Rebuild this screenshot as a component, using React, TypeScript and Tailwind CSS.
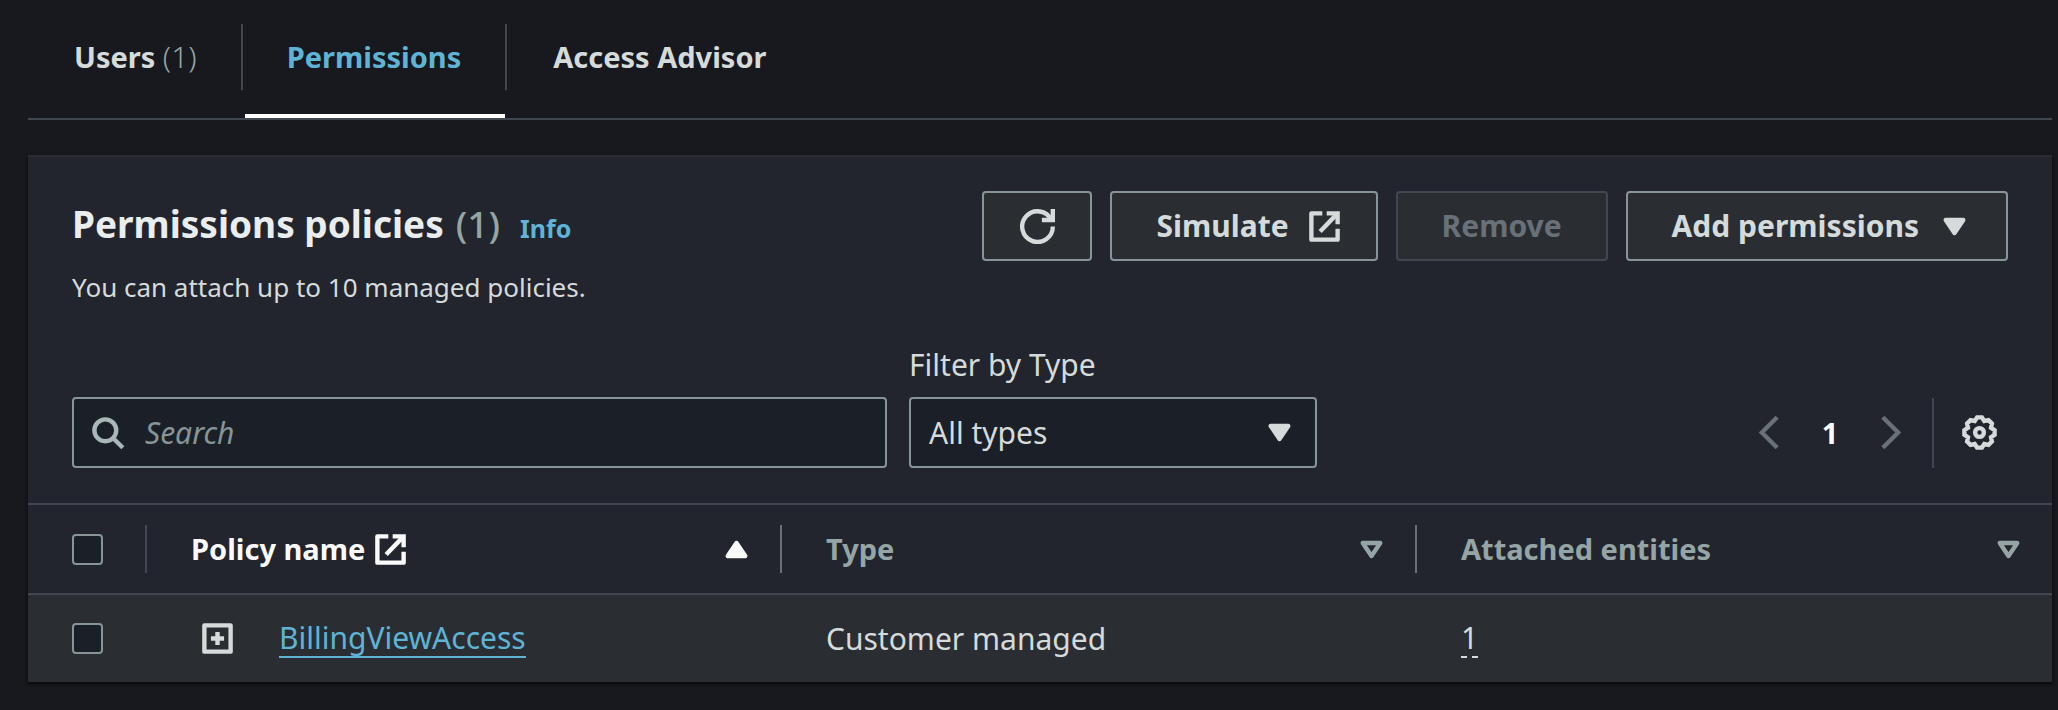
import React from "react";

type IconProps = { className?: string; children: React.ReactNode };

function Icon({ className = "", children }: IconProps) {
  return (
    <svg
      viewBox="0 0 16 16"
      className={"size-[35px] shrink-0 " + className}
      fill="none"
      stroke="currentColor"
      strokeWidth="2"
      aria-hidden="true"
    >
      {children}
    </svg>
  );
}

const External = ({ className = "" }: { className?: string }) => (
  <Icon className={className}>
    <path d="M9 2h5v5" />
    <path d="m6 10.300 8-8.300" />
    <path d="M14 9v5H2V2h5" strokeLinejoin="round" />
  </Icon>
);

const CaretDown = ({ className = "" }: { className?: string }) => (
  <Icon className={className}>
    <path d="M4 5h8l-4 6z" fill="currentColor" strokeLinejoin="round" />
  </Icon>
);

const CaretDownOutline = () => (
  <Icon>
    <path d="M4 5h8l-4 6z" strokeLinejoin="round" />
  </Icon>
);

const CaretUp = () => (
  <Icon>
    <path d="M4 11h8L8 5z" fill="currentColor" strokeLinejoin="round" />
  </Icon>
);

const Refresh = () => (
  <Icon>
    <path d="M10 5h5V0" />
    <path d="M15 8a7 7 0 1 1-.7-3" />
  </Icon>
);

const Gear = () => (
  <Icon>
    <path
      d="M6.900 1.100h2.200l1.080 1.630 1.930-.39 1.550 1.550-.39 1.930 1.630 1.080v2.200l-1.630 1.080.39 1.930-1.550 1.550-1.930-.39-1.080 1.630H6.900l-1.080-1.630-1.930.39-1.550-1.550.39-1.930L1.100 9.100V6.900l1.630-1.080-.39-1.930 1.550-1.550 1.930.39z"
    />
    <circle cx="8" cy="8" r="2" />
  </Icon>
);

const buttonBase = "flex h-[70px] items-center rounded-[4px] border-2 bg-[#2a2e33] text-[30px] leading-9 font-bold";
const buttonNormal = " border-[#879596] text-[#d5dbdb]";

function Checkbox({ label }: { label: string }) {
  return (
    <input
      type="checkbox"
      aria-label={label}
      className="block size-[31px] appearance-none rounded-[4px] border-2 border-[#879596] bg-[#1b1f28] checked:bg-[#539fe5]"
    />
  );
}

function Tabs() {
  return (
    <nav className="flex h-[120px] items-start border-b-2 border-[#414750] text-[29px] leading-9 font-bold text-[#d5dbdb]">
      <div className="flex h-[118px] flex-col pt-6">
        <a href="#users" className="flex h-[66px] items-center border-r-2 border-[#414750] pr-11 pl-[46px]">
          Users&nbsp;<span className="text-[30px] font-light text-[#95a5a6]">(1)</span>
        </a>
      </div>
      <div className="flex h-[118px] flex-col pt-6">
        <a
          href="#permissions"
          aria-current="page"
          className="flex h-[66px] items-center border-r-2 border-[#414750] px-11 text-[#5fb4d5]"
        >
          Permissions
        </a>
        <span className="mt-6 mr-[2px] ml-[2px] h-1 bg-white" />
      </div>
      <div className="flex h-[118px] flex-col pt-6">
        <a href="#advisor" className="flex h-[66px] items-center px-[46px]">
          Access Advisor
        </a>
      </div>
    </nav>
  );
}

function Toolbar() {
  return (
    <div className="flex items-end px-11">
      <label className="flex h-[71px] w-[815px] items-center rounded-[4px] border-2 border-[#879596] bg-[#1b1f28] pl-4">
        <Icon className="text-[#aab7b8]">
          <circle cx="7" cy="7" r="5" />
          <path d="m15 15-4.500-4.500" />
        </Icon>
        <input
          type="search"
          aria-label="Search"
          placeholder="Search"
          className="ml-5 w-full bg-transparent text-[30px] text-[#d5dbdb] outline-none placeholder:text-[#879596] placeholder:italic"
        />
      </label>
      <div className="ml-[22px] w-[408px]">
        <label htmlFor="type" className="mb-[14px] block text-[30px] leading-9 text-[#d5dbdb]">
          Filter by Type
        </label>
        <div className="relative">
          <select
            id="type"
            className="block h-[71px] w-full appearance-none rounded-[4px] border-2 border-[#879596] bg-[#1b1f28] pl-[18px] text-[30px] text-[#d5dbdb]"
          >
            <option>All types</option>
          </select>
          <CaretDown className="pointer-events-none absolute top-[18px] right-5 text-[#d5dbdb]" />
        </div>
      </div>
      <div className="ml-auto flex h-[71px] items-center">
        <button aria-label="Previous page" className="text-[#687078]">
          <Icon>
            <path d="m11.500 1-7 7 7 7" />
          </Icon>
        </button>
        <button aria-current="page" className="w-[86px] text-[29px] leading-9 font-bold text-[#fafafa]">
          1
        </button>
        <button aria-label="Next page" className="text-[#687078]">
          <Icon>
            <path d="m4.500 1 7 7-7 7" />
          </Icon>
        </button>
        <span className="ml-6 h-[70px] w-[2px] bg-[#414750]" />
        <button aria-label="Preferences" className="mr-[11px] ml-7 text-[#d5dbdb]">
          <Gear />
        </button>
      </div>
    </div>
  );
}

function PolicyTable() {
  return (
    <table className="w-full table-fixed border-collapse text-left text-[#d5dbdb]">
      <colgroup>
        <col className="w-[119px]" />
        <col />
        <col />
        <col />
      </colgroup>
      <thead className="text-[29px] leading-9">
        <tr className="h-[90px] border-y-2 border-[#414750] text-[#95a5a6]">
          <th className="p-0">
            <div className="flex h-12 items-center border-r-2 border-[#414750] pl-11">
              <Checkbox label="Select all policies" />
            </div>
          </th>
          <th className="p-0" aria-sort="ascending">
            <div className="flex h-12 items-center border-r-2 border-[#687078] pr-[26px] pl-11 font-bold text-[#fafafa]">
              Policy name
              <External className="ml-2" />
              <button aria-label="Sort by policy name" className="ml-auto">
                <CaretUp />
              </button>
            </div>
          </th>
          <th className="p-0">
            <div className="flex h-12 items-center border-r-2 border-[#687078] pr-[26px] pl-11 font-bold">
              Type
              <button aria-label="Sort by type" className="ml-auto">
                <CaretDownOutline />
              </button>
            </div>
          </th>
          <th className="p-0">
            <div className="flex h-12 items-center pr-[26px] pl-11 font-bold">
              Attached entities
              <button aria-label="Sort by attached entities" className="ml-auto">
                <CaretDownOutline />
              </button>
            </div>
          </th>
        </tr>
      </thead>
      <tbody className="text-[30px] leading-9">
        <tr className="h-[88px] bg-[#2a2e33]">
          <td className="p-0 pl-11">
            <Checkbox label="Select BillingViewAccess" />
          </td>
          <td className="p-0 pl-[53px]">
            <div className="flex items-center">
              <button aria-label="Expand BillingViewAccess">
                <Icon>
                  <path d="M2 2h12v12H2z" strokeLinejoin="round" />
                  <path d="M8 5v6M5 8h6" />
                </Icon>
              </button>
              <a href="#policy" className="ml-11 border-b-2 border-[#5fb4d5] text-[#5fb4d5]">
                BillingViewAccess
              </a>
            </div>
          </td>
          <td className="p-0 pl-11">Customer managed</td>
          <td className="p-0 pl-11">
            <span className="inline-block border-b-2 border-dashed border-[#d5dbdb]">1</span>
          </td>
        </tr>
      </tbody>
    </table>
  );
}

export default function App() {
  return (
    <main className="min-h-screen bg-[#18191e] pr-[6px] pl-7 font-['Noto_Sans',sans-serif]">
      <Tabs />
      <section className="mt-[35px] border-t-2 border-[#2a2e33] bg-[#22252d] shadow-[0_2px_3px_1px_rgba(0,0,0,0.5)]">
        <header className="flex items-start justify-between pt-[34px] pr-11 pl-11">
          <div>
            <h2 className="flex items-baseline pt-2 text-[37px] leading-[50px] font-bold text-[#eaeded]">
              Permissions policies
              <span className="ml-3 font-medium text-[#95a5a6]">(1)</span>
              <a href="#info" className="ml-5 text-[25px] font-bold text-[#5fb4d5]">
                Info
              </a>
            </h2>
            <p className="mt-4 text-[26px] leading-9 text-[#d5dbdb]">You can attach up to 10 managed policies.</p>
          </div>
          <div className="flex gap-[18px]">
            <button aria-label="Refresh" className={buttonBase + buttonNormal + " w-[110px] justify-center"}>
              <Refresh />
            </button>
            <button className={buttonBase + buttonNormal + " gap-[18px] pr-[34px] pl-11"}>
              Simulate
              <External />
            </button>
            <button disabled className={buttonBase + " border-[#414750] px-11 text-[#687078]"}>
              Remove
            </button>
            <button className={buttonBase + buttonNormal + " gap-[18px] pr-[34px] pl-11"}>
              Add permissions
              <CaretDown />
            </button>
          </div>
        </header>
        <div className="mt-[42px] pb-[35px]">
          <Toolbar />
        </div>
        <PolicyTable />
      </section>
    </main>
  );
}
